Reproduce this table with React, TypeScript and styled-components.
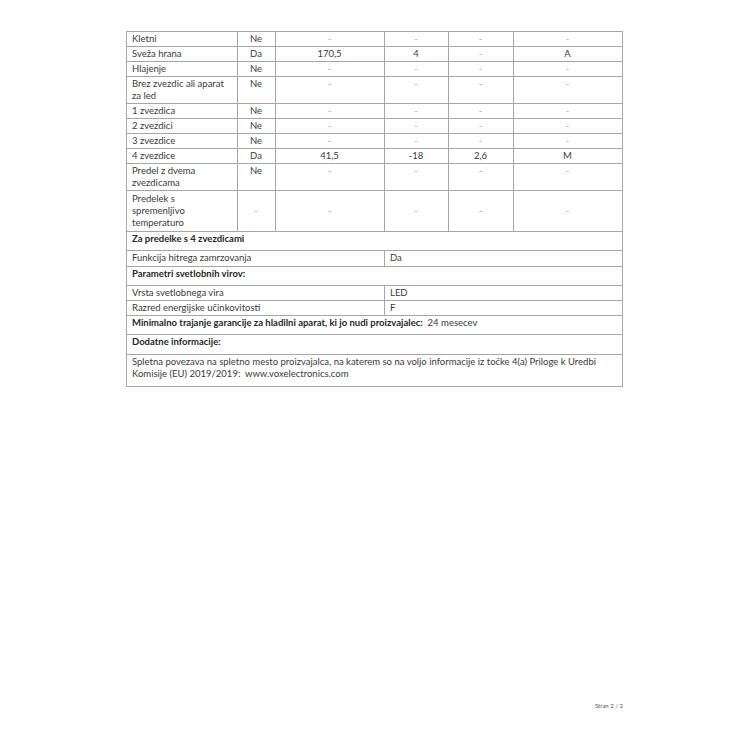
import styled, { createGlobalStyle } from "styled-components"

const Global = createGlobalStyle`
    html, body {
        margin: 0;
        padding: 0;
        background: #ffffff;
    }
`

const Page = styled.div`
    width: 750px;
    height: 750px;
    box-sizing: border-box;
    padding: 31px 0 0 126px;
    display: flex;
    flex-direction: column;
    font-family: Lato, "Liberation Sans", sans-serif;
    color: #3a3a3a;
`

const Sheet = styled.table`
    width: 496px;
    border-collapse: collapse;
    table-layout: fixed;
    font-size: 9.5px;
    line-height: 12px;
`

const Cell = styled.td<{ $center?: boolean; $middle?: boolean; $h?: number }>`
    border: 1px solid #a6a6a6;
    padding: 1px 6px 1px 5px;
    text-align: ${(p) => (p.$center ? "center" : "left")};
    vertical-align: ${(p) => (p.$middle ? "middle" : "top")};
    height: ${(p) => (p.$h ? `${p.$h}px` : "auto")};
    box-sizing: border-box;
    overflow: hidden;
`

const Line = styled.div`
    white-space: nowrap;
`

const Dash = styled.span`
    color: #a8a8a8;
`

const Strong = styled.span`
    font-weight: 700;
    color: #262626;
`

const Footer = styled.div`
    margin-top: 315px;
    width: 497px;
    text-align: right;
    font-size: 6px;
    color: #555;
`

type Row = { label: string[]; yes: string; vals: string[]; middle?: boolean }

const rows: Row[] = [
    { label: ["Kletni"], yes: "Ne", vals: ["-", "-", "-", "-"] },
    { label: ["Sveža hrana"], yes: "Da", vals: ["170,5", "4", "-", "A"] },
    { label: ["Hlajenje"], yes: "Ne", vals: ["-", "-", "-", "-"] },
    { label: ["Brez zvezdic ali aparat", "za led"], yes: "Ne", vals: ["-", "-", "-", "-"] },
    { label: ["1 zvezdica"], yes: "Ne", vals: ["-", "-", "-", "-"] },
    { label: ["2 zvezdici"], yes: "Ne", vals: ["-", "-", "-", "-"] },
    { label: ["3 zvezdice"], yes: "Ne", vals: ["-", "-", "-", "-"] },
    { label: ["4 zvezdice"], yes: "Da", vals: ["41,5", "-18", "2,6", "M"] },
    { label: ["Predel z dvema", "zvezdicama"], yes: "Ne", vals: ["-", "-", "-", "-"] },
    {
        label: ["Predelek s", "spremenljivo", "temperaturo"],
        yes: "-",
        vals: ["-", "-", "-", "-"],
        middle: true,
    },
]

const show = (v: string) => (v === "-" ? <Dash>-</Dash> : v)

export default function App() {
    return (
        <>
            <Global />
            <Page>
                <Sheet>
                    <colgroup>
                        <col style={{ width: 111 }} />
                        <col style={{ width: 38 }} />
                        <col style={{ width: 109 }} />
                        <col style={{ width: 64 }} />
                        <col style={{ width: 65 }} />
                        <col style={{ width: 109 }} />
                    </colgroup>
                    <tbody>
                        {rows.map((r) => (
                            <tr key={r.label.join(" ")}>
                                <Cell $middle={r.middle} $h={r.label.length === 3 ? 41 : undefined}>
                                    {r.label.map((l) => (
                                        <Line key={l}>{l}</Line>
                                    ))}
                                </Cell>
                                <Cell $center $middle={r.middle}>
                                    {show(r.yes)}
                                </Cell>
                                {r.vals.map((v, i) => (
                                    <Cell key={i} $center $middle={r.middle}>
                                        {show(v)}
                                    </Cell>
                                ))}
                            </tr>
                        ))}
                        <tr>
                            <Cell colSpan={6} $h={19}>
                                <Strong>Za predelke s 4 zvezdicami</Strong>
                            </Cell>
                        </tr>
                        <tr>
                            <Cell colSpan={3} $h={16}>
                                Funkcija hitrega zamrzovanja
                            </Cell>
                            <Cell colSpan={3}>Da</Cell>
                        </tr>
                        <tr>
                            <Cell colSpan={6} $h={19}>
                                <Strong>Parametri svetlobnih virov:</Strong>
                            </Cell>
                        </tr>
                        <tr>
                            <Cell colSpan={3}>Vrsta svetlobnega vira</Cell>
                            <Cell colSpan={3}>LED</Cell>
                        </tr>
                        <tr>
                            <Cell colSpan={3}>Razred energijske učinkovitosti</Cell>
                            <Cell colSpan={3}>F</Cell>
                        </tr>
                        <tr>
                            <Cell colSpan={6} $h={19}>
                                <Strong>
                                    Minimalno trajanje garancije za hladilni aparat,
                                    ki jo nudi proizvajalec:
                                </Strong>
                                &nbsp; 24 mesecev
                            </Cell>
                        </tr>
                        <tr>
                            <Cell colSpan={6} $h={20}>
                                <Strong>Dodatne informacije:</Strong>
                            </Cell>
                        </tr>
                        <tr>
                            <Cell colSpan={6} $h={32}>
                                Spletna povezava na spletno mesto proizvajalca, na
                                katerem so na voljo informacije iz točke 4(a)
                                Priloge k Uredbi Komisije (EU) 2019/2019:&nbsp;
                                www.voxelectronics.com
                            </Cell>
                        </tr>
                    </tbody>
                </Sheet>
                <Footer>Stran 2 / 2</Footer>
            </Page>
        </>
    )
}
